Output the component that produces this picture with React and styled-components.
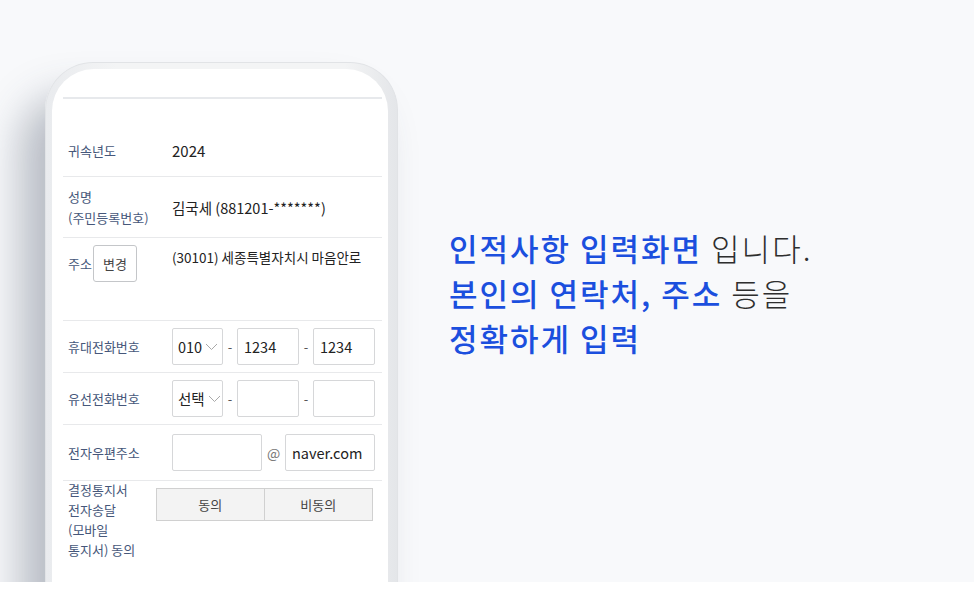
import styled, { createGlobalStyle } from "styled-components"

const GlobalStyle = createGlobalStyle`
  html, body {
    margin: 0;
    padding: 0;
    background: #ffffff;
  }
  body {
    font-family: "Noto Sans CJK KR", "Noto Sans", sans-serif;
  }
`

function Chevron() {
  return (
    <svg width="13" height="8" viewBox="0 0 13 8">
      <polyline points="1,1 6.5,6.5 12,1" fill="none" stroke="#a9a9a9" strokeWidth="1" />
    </svg>
  )
}

export default function App() {
  return (
    <Page>
      <GlobalStyle />
      <Stage>
        <Phone>
          <Screen>
            <TopRule />
            <Row $h={52}>
              <Label>귀속년도</Label>
              <Value $size={15}>2024</Value>
            </Row>
            <Row $h={61}>
              <Label>
                성명
                <br />
                (주민등록번호)
              </Label>
              <Value>김국세 (881201-*******)</Value>
            </Row>
            <Row $h={83} $top>
              <AddrLabel>
                <Label>주소</Label>
                <SmallButton>변경</SmallButton>
              </AddrLabel>
              <Value $size={13.5} $offset={2}>
                (30101) 세종특별자치시 마음안로
              </Value>
            </Row>
            <Row $h={52}>
              <Label>휴대전화번호</Label>
              <Fields>
                <Select>
                  010
                  <Chevron />
                </Select>
                <Sep>-</Sep>
                <Field>1234</Field>
                <Sep>-</Sep>
                <Field>1234</Field>
              </Fields>
            </Row>
            <Row $h={52}>
              <Label>유선전화번호</Label>
              <Fields>
                <Select>
                  선택
                  <Chevron />
                </Select>
                <Sep>-</Sep>
                <Field />
                <Sep>-</Sep>
                <Field />
              </Fields>
            </Row>
            <Row $h={56}>
              <Label>전자우편주소</Label>
              <EmailFields>
                <Field />
                <At>@</At>
                <Field>naver.com</Field>
              </EmailFields>
            </Row>
            <Row $h={110} $top $labelW={93} $last>
              <Label $tight>
                결정통지서
                <br />
                전자송달
                <br />
                (모바일
                <br />
                통지서) 동의
              </Label>
              <Toggle>
                <ToggleButton>동의</ToggleButton>
                <ToggleButton>비동의</ToggleButton>
              </Toggle>
            </Row>
          </Screen>
        </Phone>
        <Copy>
          <Line>
            <Strong>인적사항 입력화면</Strong> <Soft>입니다.</Soft>
          </Line>
          <Line>
            <Strong>본인의 연락처, 주소</Strong> <Soft>등을</Soft>
          </Line>
          <Line>
            <Strong>정확하게 입력</Strong>
          </Line>
        </Copy>
      </Stage>
    </Page>
  )
}

const Page = styled.div`
  width: 974px;
  height: 602px;
  background: #ffffff;
`

const Stage = styled.div`
  height: 582px;
  background: #f8f9fb;
  display: flex;
  align-items: flex-start;
  padding-left: 45px;
  overflow: hidden;
`

const Phone = styled.div`
  flex: none;
  width: 353px;
  height: 580px;
  margin-top: 62px;
  box-sizing: border-box;
  padding: 6px 9px 0 6px;
  background: linear-gradient(90deg, #e9ebee 0%, #f3f4f5 20%, #f3f4f5 85%, #e4e6e9 100%);
  border: 1px solid #e1e3e6;
  border-bottom: none;
  border-radius: 48px 48px 0 0;
  box-shadow: -24px 34px 40px rgba(60, 70, 92, 0.34);
`

const Screen = styled.div`
  height: 100%;
  box-sizing: border-box;
  background: #ffffff;
  border-radius: 42px 42px 0 0;
  padding: 28px 6px 0 11px;
`

const TopRule = styled.div`
  height: 2px;
  background: #e7e9ec;
  margin-bottom: 26px;
`

const Row = styled.div`
  display: grid;
  grid-template-columns: ${(p) => p.$labelW || 109}px 1fr;
  align-items: ${(p) => (p.$top ? "start" : "center")};
  height: ${(p) => p.$h}px;
  box-sizing: border-box;
  padding-top: ${(p) => (p.$top ? "7px" : "0")};
  border-bottom: ${(p) => (p.$last ? "none" : "1px solid #e8e9eb")};
  padding-right: 8px;
`

const Label = styled.div`
  padding-left: 5px;
  font-size: 13px;
  line-height: ${(p) => (p.$tight ? "20px" : "21px")};
  color: #46577a;
  margin-top: ${(p) => (p.$tight ? "-8px" : "0")};
`

const AddrLabel = styled.div`
  display: flex;
  align-items: center;

  & > ${Label} {
    padding-right: 1px;
  }
`

const SmallButton = styled.div`
  width: 44px;
  height: 37px;
  box-sizing: border-box;
  border: 1px solid #c4c6c9;
  border-radius: 3px;
  display: flex;
  align-items: center;
  justify-content: center;
  font-size: 13px;
  color: #444;
  background: #fff;
`

const Value = styled.div`
  font-size: ${(p) => p.$size || 14.5}px;
  color: #222;
  margin-top: ${(p) => p.$offset || 0}px;
`

const Fields = styled.div`
  display: grid;
  grid-template-columns: 51px 14px 62px 14px 62px;
  align-items: center;
`

const EmailFields = styled.div`
  display: grid;
  grid-template-columns: 90px 23px 90px;
  align-items: center;
`

const Box = styled.div`
  height: 37px;
  box-sizing: border-box;
  border: 1px solid #d6d7d9;
  border-radius: 2px;
  background: #fff;
  display: flex;
  align-items: center;
  font-size: 14.5px;
  color: #222;
`

const Select = styled(Box)`
  padding-left: 5px;
  gap: 3px;
`

const Field = styled(Box)`
  padding-left: 6px;
`

const Sep = styled.span`
  text-align: center;
  font-size: 13px;
  color: #555;
`

const At = styled.span`
  text-align: center;
  font-size: 14px;
  color: #777;
`

const Toggle = styled.div`
  display: grid;
  grid-template-columns: 1fr 1fr;
  height: 33px;
  margin-right: 1px;
`

const ToggleButton = styled.div`
  display: flex;
  align-items: center;
  justify-content: center;
  background: #f3f3f3;
  border: 1px solid #d0d0d0;
  font-size: 13px;
  color: #444;

  & + & {
    border-left: none;
  }
`

const Copy = styled.div`
  align-self: center;
  margin-left: 51px;
  padding-top: 2px;
  font-size: 31px;
  line-height: 45px;
  letter-spacing: 2px;
`

const Line = styled.div`
  white-space: nowrap;
`

const Strong = styled.span`
  color: #1b4fde;
  font-weight: 500;
`

const Soft = styled.span`
  color: #2e2e2e;
  font-weight: 300;
`
